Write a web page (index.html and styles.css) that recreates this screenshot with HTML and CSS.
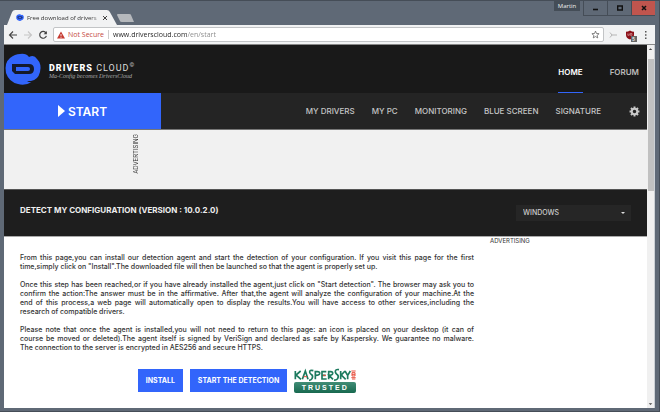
FILE: index.html
```html
<!DOCTYPE html>
<html lang="en">
<head>
<meta charset="utf-8">
<title>Free download of drivers</title>
<link rel="stylesheet" href="styles.css">
</head>
<body>
<div class="window">
  <div class="titlebar">
    <div class="tab">
      <svg class="tab-shape" viewBox="0 0 108 15" preserveAspectRatio="none" aria-hidden="true"><path d="M0 15 L5 2 Q6 0 8 0 H98 Q100 0 101 2 L108 15Z" fill="#f1f2f3"/></svg>
      <svg class="favicon" viewBox="0 0 36 32" aria-hidden="true"><use href="#cloud-mark"/></svg>
      <span class="tab-title">Free download of drivers</span>
      <button class="tab-close" aria-label="Close tab"><svg viewBox="0 0 6 6"><path d="M1 1l4 4M5 1L1 5" stroke="#444" fill="none"/></svg></button>
    </div>
    <button class="new-tab" aria-label="New tab"><svg viewBox="0 0 17 8"><path d="M1 0H12Q14 0 14 1L17 8H5Q3 8 3 7L0 1Q0 0 1 0Z" fill="#b5b8bc"/></svg></button>
    <div class="window-controls">
      <button class="profile">Martin</button>
      <button class="control" aria-label="Minimize"><svg viewBox="0 0 8 8"><path d="M1 5.5h5" stroke="#111" stroke-width="1.6"/></svg></button>
      <button class="control" aria-label="Maximize"><svg viewBox="0 0 8 8"><path d="M1.7 2h4.6v4H1.7z" fill="none" stroke="#111" stroke-width="1.4"/></svg></button>
      <button class="control control-close" aria-label="Close window"><svg viewBox="0 0 8 8"><path d="M2 2l4 4M6 2L2 6" stroke="#111" stroke-width="1.5"/></svg></button>
    </div>
  </div>

  <div class="toolbar">
    <button class="tool" aria-label="Back"><svg viewBox="0 0 10 10"><path d="M9 5H2M5 1.5L1.5 5L5 8.500" fill="none" stroke="#444" stroke-width="1.1"/></svg></button>
    <button class="tool" aria-label="Forward"><svg viewBox="0 0 10 10"><path d="M1 5H8M5 1.500L8.500 5L5 8.500" fill="none" stroke="#c6c6c6" stroke-width="1.1"/></svg></button>
    <button class="tool" aria-label="Reload"><svg viewBox="0 0 10 10"><path d="M8 3A3.400 3.400 0 1 0 8.400 5.800" fill="none" stroke="#444" stroke-width="1.200"/><path d="M8.900 1v3.300H5.600z" fill="#444"/></svg></button>
    <label class="address">
      <svg class="warning" viewBox="0 0 8 8" aria-hidden="true"><path d="M4 .5L8 7.500H0Z" fill="#c53a31"/><path d="M4 3v2.200M4 5.800v1" stroke="#fff" stroke-width=".8"/></svg>
      <span class="secure">Not Secure</span>
      <input class="url" type="text" value="www.driverscloud.com/en/start">
      <svg class="star" viewBox="0 0 10 10" aria-hidden="true"><path d="M5 1.200L6.100 3.900L9 4.100L6.800 6L7.500 8.800L5 7.300L2.500 8.800L3.200 6L1 4.100L3.900 3.900Z" fill="none" stroke="#666" stroke-width=".9"/></svg>
    </label>
    <button class="tool extension" aria-label="Extension"><svg viewBox="0 0 10 10"><path d="M2 2.500L4 5L2 7.500M4 5h5" fill="none" stroke="#b5b5b5"/></svg></button>
    <button class="tool blocker" aria-label="Content blocker"><svg viewBox="0 0 12 12"><path d="M5 .5Q7 1.800 9 1.800V5Q9 8 5 9.500Q1 8 1 5V1.800Q3 1.800 5 .5Z" fill="#8c1019"/><path d="M2.800 3.500v1.800h1.400V3.500M5.300 3.500h1.600v1.800H5.300z" fill="none" stroke="#e5b5b5" stroke-width=".6"/><path d="M6 6h6v6H6z" fill="#666"/></svg><span class="count">5</span></button>
    <button class="tool menu" aria-label="Menu"><svg viewBox="0 0 10 10"><path d="M4 1h1.500v1.500H4zM4 4.200h1.500v1.500H4zM4 7.400h1.500v1.500H4z" fill="#555"/></svg></button>
  </div>

  <div class="viewport">
    <div class="page">
      <header class="header">
        <a class="brand" href="#">
          <svg class="mark" viewBox="0 0 36 32" aria-hidden="true">
            <g id="cloud-mark"><path d="M15 1Q21 0 24 4Q29 1 32 6Q37 11 35 19Q33 27 26 28L22 28Q25 30 27 29Q20 33 13 31Q4 29 1 20Q-1 10 5 5Q10 1 15 1Z" fill="#3265fb"/><path d="M7 11H24Q29 11 29 16Q29 21 24 21H10L7 18Z" fill="#151a2c"/><path d="M11 14H23Q25 14 25 16Q25 18 23 18H11Z" fill="#3265fb"/></g>
          </svg>
          <span class="brand-text">
            <span class="brand-name"><b>DRIVERS</b> CLOUD<sup>©</sup></span>
            <span class="tagline">Ma-Config becomes DriversCloud</span>
          </span>
        </a>
        <nav class="top-nav">
          <a class="active" href="#">HOME</a>
          <a href="#">FORUM</a>
        </nav>
      </header>

      <div class="menu-bar">
        <button class="start"><svg viewBox="0 0 7 12" aria-hidden="true"><path d="M0 0L7 6L0 12Z" fill="#fff"/></svg>START</button>
        <nav class="main-nav">
          <a href="#">MY DRIVERS</a>
          <a href="#">MY PC</a>
          <a href="#">MONITORING</a>
          <a href="#">BLUE SCREEN</a>
          <a href="#">SIGNATURE</a>
        </nav>
        <button class="settings" aria-label="Settings"><svg viewBox="0 0 20 20"><path d="M10 1v18M1 10h18M3.600 3.600l12.800 12.800M16.400 3.600L3.600 16.400" stroke="#c8c8c8" stroke-width="3.600"/><circle cx="10" cy="10" r="5" fill="#242424" stroke="#c8c8c8" stroke-width="3.600"/></svg></button>
      </div>

      <aside class="banner"><span class="banner-label">ADVERTISING</span></aside>

      <div class="section-head">
        <h1>DETECT MY CONFIGURATION (VERSION : 10.0.2.0)</h1>
        <div class="platform">
          <select aria-label="Platform"><option>WINDOWS</option></select>
          <svg viewBox="0 0 4 2" aria-hidden="true"><path d="M0 0h4L2 2z" fill="#ddd"/></svg>
        </div>
      </div>

      <main class="content">
        <div class="copy">
          <p><span>From this page,you can install our detection agent and start the detection of your configuration. If you visit this page for the first</span> <span>time,simply click on "Install".The downloaded file will then be launched so that the agent is properly set up.</span></p>
          <p><span>Once this step has been reached,or if you have already installed the agent,just click on "Start detection". The browser may ask you to</span> <span>confirm the action:The answer must be in the affirmative. After that,the agent will analyze the configuration of your machine.At the</span> <span>end of this process,a web page will automatically open to display the results.You will have access to other services,including the</span> <span>research of compatible drivers.</span></p>
          <p><span>Please note that once the agent is installed,you will not need to return to this page: an icon is placed on your desktop (it can of</span> <span>course be moved or deleted).The agent itself is signed by VeriSign and declared as safe by Kaspersky. We guarantee no malware.</span> <span>The connection to the server is encrypted in AES256 and secure HTTPS.</span></p>
          <div class="actions">
            <button class="action">INSTALL</button>
            <button class="action">START THE DETECTION</button>
            <div class="trust">
              <svg class="kaspersky" viewBox="0 0 186 36" role="img" aria-label="Kaspersky Lab"><g fill="none" stroke="#1c7a5e" stroke-width="5"><path d="M4 6v25M20 6L6 18L21 31"/><path d="M25 31L34 6L42 31"/><path d="M58 5Q46 2 47 10Q48 14 53 17Q58 22 54 29Q51 34 45 34"/><path d="M64 31V8H70Q78 8 77 14Q76 19 65 19"/><path d="M97 8H84V30H98M84 19H95"/><path d="M104 31V8H110Q117 8 116 14Q115 19 105 19L117 31"/><path d="M135 2Q123 0 124 9Q125 14 130 17Q135 22 131 29Q128 34 120 33"/><path d="M140 6v25M153 6L142 18L155 31"/><path d="M153 6L161 19L169 6M161 19V31"/></g><path d="M29 23h10M87 19h9M172 26h13M172 6h13M174 11v10h9V11zM174 16h9M174 30h10" fill="none" stroke="#e8503f" stroke-width="3"/></svg>
              <span class="trusted">TRUSTED</span>
            </div>
          </div>
        </div>
        <aside class="side-label">ADVERTISING</aside>
      </main>
    </div>
    <div class="scrollbar" aria-hidden="true">
      <svg viewBox="0 0 8 8"><path d="M2 5h4L4 3z" fill="#444"/></svg>
      <div class="thumb"></div>
      <svg class="down" viewBox="0 0 8 8"><path d="M2 3h4L4 5z" fill="#444"/></svg>
    </div>
  </div>
</div>
</body>
</html>
```

FILE: styles.css
```css
* { box-sizing: border-box; }
body { margin: 0; font-family: Inter, "Liberation Sans", sans-serif; }
button { border: 0; padding: 0; background: none; color: inherit; font-family: inherit; }
a { color: inherit; text-decoration: none; }
svg { display: block; overflow: visible; }

.window {
  display: flex;
  flex-direction: column;
  min-height: 100vh;
  padding: 0 4px 3px;
  background: #5f6976;
  border: solid #454d57;
  border-width: 1px 1px 1px 0;
}

/* Browser chrome */
.titlebar { display: flex; align-items: flex-end; height: 24px; }
.tab { position: relative; display: flex; align-items: center; width: 110px; height: 15px; margin-left: 3px; padding: 0 5px 0 9px; }
.tab-shape { position: absolute; inset: 0; width: 100%; height: 100%; }
.favicon { position: relative; width: 8px; height: 7px; }
.tab-title {
  position: relative; flex: 1; min-width: 0; margin-left: 3px; white-space: nowrap;
  font: 6px/12px "Open Sans", sans-serif; color: #333;
  mask-image: linear-gradient(90deg, #000 85%, #0006);
}
.tab-close { position: relative; width: 6px; height: 6px; margin: 0 4px 0 2px; }
.new-tab { width: 17px; height: 8px; margin: 0 0 3px; }
.window-controls { display: flex; align-self: flex-start; margin-left: auto; }
.profile { width: 26px; height: 10px; margin-right: 3px; background: #444d57; color: #eee; font: 6px/9px "Open Sans", sans-serif; }
.control { display: grid; place-items: center; width: 24px; height: 15px; border: solid #454d57; border-width: 0 0 1px 1px; }
.control svg { width: 8px; height: 8px; }
.control-close { background: #c0554e; }

.toolbar { display: flex; align-items: center; height: 20px; padding: 0 4px; background: #f1f2f3; border-bottom: 1px solid #888; }
.tool { position: relative; width: 10px; height: 10px; margin-right: 5px; }
.address { display: flex; flex: 1; align-items: center; height: 15px; padding: 0 3px; background: #fff; border: 1px solid #c2c4c6; border-radius: 2px; font: 7px/12px "Open Sans", sans-serif; }
.warning { width: 8px; height: 8px; margin-right: 3px; }
.secure { padding-right: 4px; border-right: 1px solid #ccc; line-height: 9px; color: #c54a42; white-space: nowrap; }
.url {
  flex: 1; min-width: 0; margin-left: 4px; padding: 0; border: 0; outline: 0; font: inherit; color: transparent;
  background: linear-gradient(90deg, #222 74px, #888 74px); background-clip: text;
}
.star { width: 9px; height: 9px; }
.extension { margin: 0 7px 0 4px; }
.blocker svg { width: 12px; height: 12px; }
.blocker { margin-right: 6px; }
.count { position: absolute; left: 7px; top: 6px; color: #fff; font-size: 5px; line-height: 6px; }
.menu { margin: 0; }

.viewport { display: flex; flex: 1; }
.page { flex: 1; min-width: 0; background: #fff; }
.scrollbar { display: flex; flex-direction: column; width: 8px; background: #f0f0f0; border-right: 1px solid #cbd0d5; }
.scrollbar svg { width: 7px; height: 8px; }
.thumb { height: 132px; margin: 6px 0 0 1px; background: #c1c1c1; }
.scrollbar .down { margin-top: auto; }

/* Site header */
.header { display: flex; justify-content: space-between; height: 48px; padding-right: 8px; background: #191919; }
.brand { display: flex; align-items: center; padding-left: 1px; }
.mark { width: 36px; height: 32px; }
.brand-text { display: flex; flex-direction: column; margin: 4px 0 0 8px; color: #ddd; }
.brand-name { font: 9px/9px Roboto, sans-serif; letter-spacing: 1px; white-space: nowrap; }
.brand-name b { color: #fff; font-weight: 900; }
.brand-name sup { font-size: 6px; line-height: 1px; }
.tagline { color: #aaa; font: italic 6px/6px "Liberation Serif", serif; white-space: nowrap; }
.top-nav { display: flex; gap: 27px; color: #bbb; font-size: 8px; font-weight: 600; line-height: 55px; }
.top-nav a { height: 48px; }
.top-nav .active { color: #fff; border-bottom: 1px solid #3265fb; }

.menu-bar { display: flex; align-items: center; height: 37px; padding-right: 7px; background: #242424; border-bottom: 1px solid #777; }
.start { display: flex; align-items: center; justify-content: center; gap: 3px; align-self: stretch; width: 157px; background: #3265fb; color: #fff; font-size: 12px; font-weight: 600; }
.start svg { width: 7px; height: 12px; }
.main-nav { display: flex; gap: 17px; margin-left: auto; color: #c4c4c4; font-size: 8px; font-weight: 500; line-height: 12px; white-space: nowrap; }
.settings { width: 11px; height: 11px; margin-left: 28px; }

.banner { height: 59px; padding: 4px 128px; background: #f1f1f1; }
.banner-label { display: block; writing-mode: vertical-rl; transform: rotate(180deg); font-size: 6px; line-height: 7px; color: #333; }

.section-head { display: flex; justify-content: space-between; height: 48px; padding: 15px 16px; background: #1e1e1e; border-top: 1px solid #555; border-bottom: 1px solid #aaa; }
h1 { margin: 0; color: #eee; font-size: 8px; font-weight: 700; line-height: 10px; white-space: nowrap; }
.platform { position: relative; width: 115px; height: 16px; }
.platform select { display: block; width: 100%; height: 16px; padding: 0 7px; appearance: none; border: 0; border-radius: 0; background: #262626; color: #ccc; font: 500 7px/16px Inter, sans-serif; }
.platform svg { position: absolute; right: 6px; top: 7px; width: 4px; height: 2px; }

/* Article */
.content { display: flex; align-items: flex-start; padding-left: 16px; }
.copy { flex: 0 1 454px; padding-top: 16px; color: #333; font-size: 7px; font-weight: 500; line-height: 9px; }
p { margin: 0 0 9px; }
p span { display: block; text-align: justify; text-align-last: justify; white-space: nowrap; }
p span:last-child { text-align-last: left; }
.actions { display: flex; justify-content: center; gap: 7px; padding-top: 8px; }
.action { height: 23px; padding: 0 8px; background: #3265fb; color: #fff; font-size: 7px; font-weight: 700; white-space: nowrap; }
.trust { width: 62px; }
.kaspersky { width: 62px; height: 12px; }
.trusted { display: block; height: 11px; margin-top: 1px; border-radius: 2px; background: linear-gradient(#418d76, #17694f); color: #fff; font: bold 7px/11px "Liberation Sans", sans-serif; letter-spacing: 2px; text-align: center; }
.side-label { margin-left: 16px; color: #333; font-size: 6px; line-height: 7px; }
```
